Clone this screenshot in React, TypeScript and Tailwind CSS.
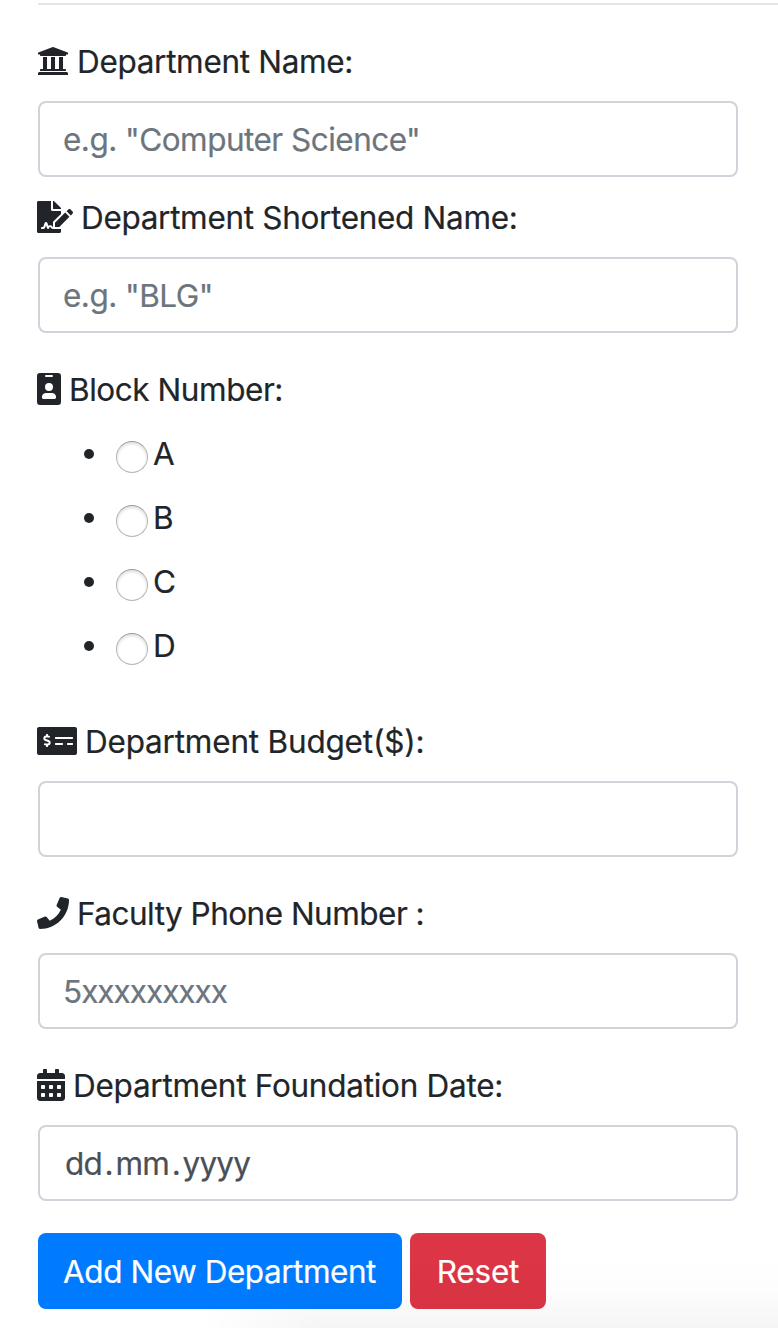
import type { ReactNode } from "react";
import {
  FaCalendarAlt,
  FaFileSignature,
  FaMoneyCheckAlt,
  FaPhone,
  FaUniversity,
} from "react-icons/fa";

function IdBadge() {
  return (
    <svg viewBox="0 0 24 32" className="h-8 w-6" fill="currentColor">
      <path
        fillRule="evenodd"
        d="M21 0H3a3 3 0 0 0-3 3v26a3 3 0 0 0 3 3h18a3 3 0 0 0 3-3V3a3 3 0 0 0-3-3ZM9 2h6a1 1 0 0 1 0 2H9a1 1 0 0 1 0-2Zm3 8a4 4 0 1 1 0 8 4 4 0 0 1 0-8Zm7 14.800c0 .66-.63 1.200-1.400 1.200H6.400C5.630 26 5 25.460 5 24.800v-1.200C5 21.610 6.880 20 9.200 20h5.600c2.320 0 4.200 1.610 4.200 3.600v1.200Z"
      />
    </svg>
  );
}

function Label({ icon, text, children }: { icon: ReactNode; text: string; children: ReactNode }) {
  return (
    <div className="mb-4 -ml-px flex h-12 items-center whitespace-pre">
      {icon}
      <span className={`pt-[2px] ${text}`}>{children}</span>
    </div>
  );
}

const field =
  "block h-[76px] w-[700px] rounded-lg border-2 border-[#ced4da] bg-white px-[23px] text-[31.5px] text-[#495057] outline-none placeholder:text-[#6c757d] placeholder:opacity-100";

export default function App() {
  return (
    <div className="relative h-[1328px] w-[778px] overflow-hidden bg-white pl-[38px] pt-[3px] font-['Inter',sans-serif] text-[31.5px] leading-[48px] text-[#212529] [-webkit-text-stroke:0.2px]">
      <hr className="mb-8 border-0 border-t-2 border-[#e5e5e5]" />

      <Label text="ml-[8px] tracking-[-0.32px]" icon={<FaUniversity className="size-8" />}>
        Department Name:
      </Label>
      <input className={`${field} mb-4 tracking-[-0.52px]`} placeholder={'e.g. "Computer Science"'} />

      <Label text="ml-[8px] tracking-[-0.32px]" icon={<FaFileSignature className="h-8 w-9" />}>
        Department Shortened Name:
      </Label>
      <input className={`${field} mb-8 tracking-[-0.52px]`} placeholder={'e.g. "BLG"'} />

      <Label text="ml-[8px] tracking-[-0.45px]" icon={<IdBadge />}>
        Block Number:
      </Label>
      <ul className="mb-[32px] h-[256px] pt-[2px]">
        {["A", "B", "C", "D"].map((block) => (
          <li key={block} className="mb-4 flex h-12 items-center pl-[46px]">
            <span className="-mt-[2px] size-[10px] rounded-full bg-[#212529]" />
            <input
              type="radio"
              name="block"
              aria-label={block}
              className="ml-[22px] mr-[5px] mt-1 size-8 appearance-none rounded-full border border-[#b7b7b7] border-t-[#9b9b9b] bg-white shadow-[inset_0_2px_3px_rgba(0,0,0,0.13)]"
            />
            <span className="-mt-[2px]">{block}</span>
          </li>
        ))}
      </ul>

      <Label text="ml-[8px] tracking-[-0.2px]" icon={<FaMoneyCheckAlt className="h-8 w-10" />}>
        Department Budget($):
      </Label>
      <input className={`${field} mb-8`} aria-label="Department Budget" />

      <Label text="ml-[8px] tracking-[-0.52px]" icon={<FaPhone className="size-8" />}>
        Faculty Phone Number :
      </Label>
      <input className={`${field} mb-8 tracking-[-1px]`} placeholder="5xxxxxxxxx" />

      <Label text="ml-[8px] tracking-[-0.27px]" icon={<FaCalendarAlt className="h-8 w-7" />}>
        Department Foundation Date:
      </Label>
      <div className={`${field} mb-8 pl-[25px] pt-[13px] tracking-[-0.85px]`}>
        <span>dd</span>
        <span className="mx-[2.7px]">.</span>
        <span>mm</span>
        <span className="mx-[2.7px]">.</span>
        <span>yyyy</span>
      </div>

      <div className="flex gap-2 text-white">
        <button className="h-[76px] w-[364px] whitespace-nowrap rounded-lg bg-[#007bff] pr-px pt-[2px] tracking-[-0.47px]">
          Add New Department
        </button>
        <button className="h-[76px] w-[136px] rounded-lg bg-[#dc3545] pt-[2px] tracking-[-0.2px]">Reset</button>
      </div>

      <div className="pointer-events-none absolute bottom-0 left-[200px] right-0 h-[70px] bg-linear-to-b from-black/0 via-black/1 to-black/4 [mask-image:linear-gradient(to_right,transparent,black_120px)]" />
    </div>
  );
}
